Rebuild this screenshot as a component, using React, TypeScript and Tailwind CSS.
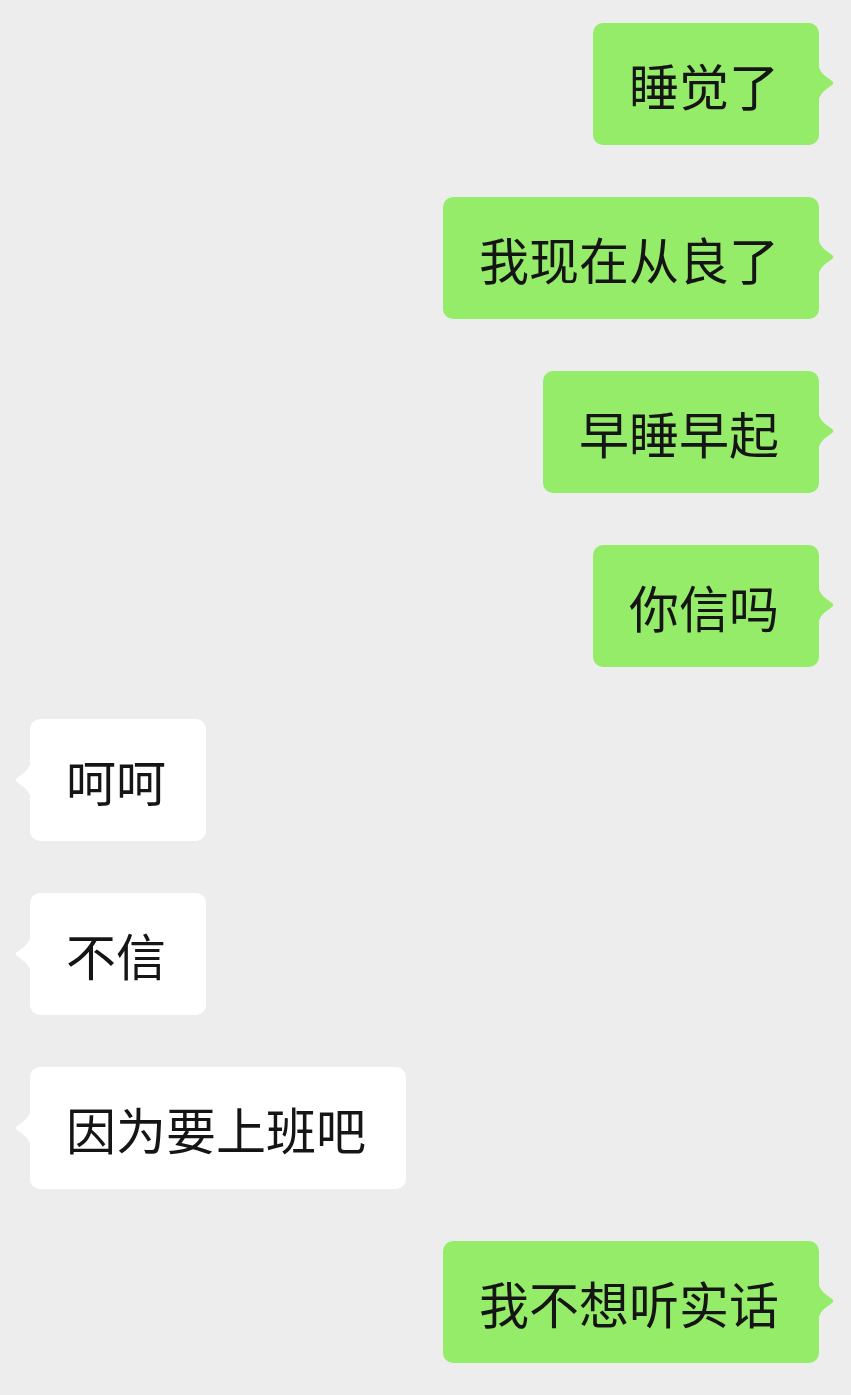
import React from 'react';

type Msg = { text: string; mine: boolean };

const messages: Msg[] = [
  { text: '睡觉了', mine: true },
  { text: '我现在从良了', mine: true },
  { text: '早睡早起', mine: true },
  { text: '你信吗', mine: true },
  { text: '呵呵', mine: false },
  { text: '不信', mine: false },
  { text: '因为要上班吧', mine: false },
  { text: '我不想听实话', mine: true },
];

function Tail({ mine }: { mine: boolean }) {
  const fill = mine ? '#95ec69' : '#ffffff';
  return (
    <svg
      width="17"
      height="40"
      viewBox="0 0 17 40"
      className={mine ? 'absolute top-[40px] -right-[16px]' : 'absolute top-[41px] -left-[16px] -scale-x-100'}
    >
      <path d="M0 0 C1 6 3 9 6 12 L14 18 Q16.5 20 14 22 L6 28 C3 31 1 34 0 40 Z" fill={fill} />
    </svg>
  );
}

function Bubble({ msg }: { msg: Msg }) {
  return (
    <div className={msg.mine ? 'flex justify-end pr-[32px]' : 'flex justify-start pl-[30px]'}>
      <div
        className={`relative h-[122px] pl-[36px] pr-[40px] flex items-center rounded-[10px] ${
          msg.mine ? 'bg-[#95ec69]' : 'bg-white'
        }`}
      >
        <Tail mine={msg.mine} />
        <span className="text-[50px] leading-none text-[#151515] whitespace-nowrap">{msg.text}</span>
      </div>
    </div>
  );
}

export default function App() {
  return (
    <div
      className="w-[851px] min-h-[1395px] bg-[#ededed] pt-[23px] pb-[32px] flex flex-col gap-[52px]"
      style={{ fontFamily: '"Noto Sans CJK SC", "Noto Sans", sans-serif' }}
    >
      {messages.map((m, i) => (
        <Bubble key={i} msg={m} />
      ))}
    </div>
  );
}
